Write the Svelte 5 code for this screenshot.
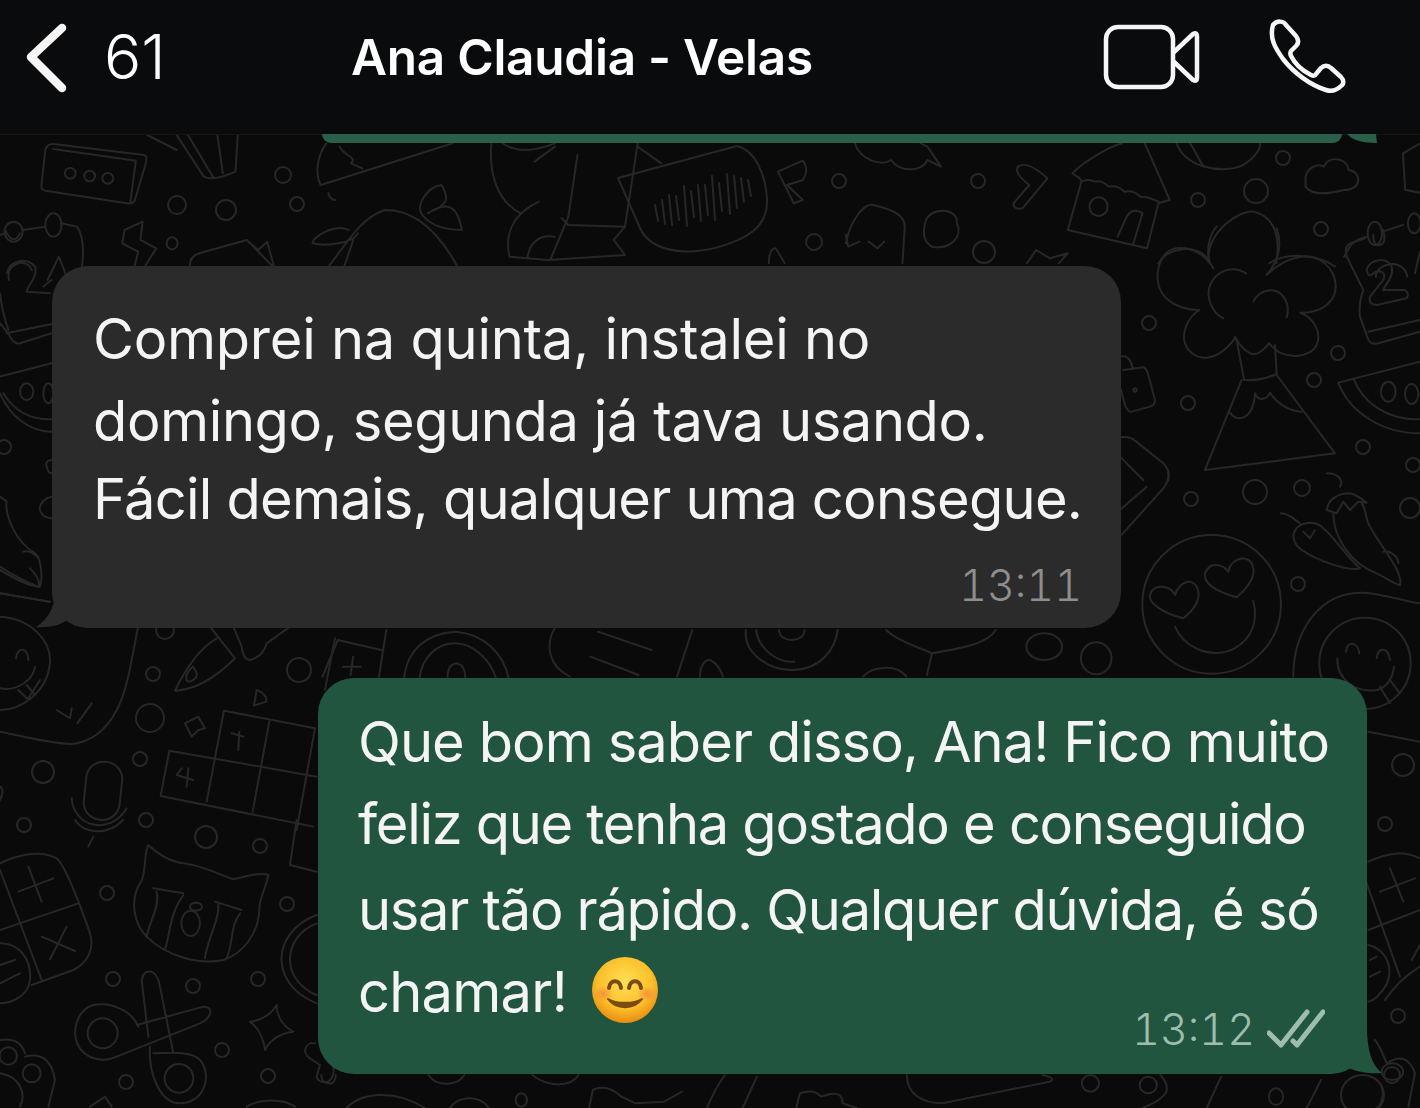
<script>
  const circles = [
    [283,175,8],[177,205,9],[226,210,10],[297,204,7],[839,181,7],[978,181,7],[1198,200,7],[1283,158,7],[1256,191,12],[1321,229,7],[814,242,8],[984,252,11],
    [1149,323,7],[1188,403,7],[1338,353,7],[1314,380,7],[1363,447,7],[1413,465,7],[1191,499,7],[1255,492,12],[1302,488,8],[1298,584,7],[1410,508,10],
    [4,447,7],[165,630,9],[153,674,7],[150,718,14],[299,670,12],[140,759,7],[43,772,11],[146,820,7],[107,893,7],[206,837,11],[260,846,7],[287,904,7],[113,979,7],[193,986,7],[258,979,7],[222,1050,7],[126,1082,7],[268,1076,7],[24,825,7],[1403,765,11],[1385,824,7],[1398,1016,7],[1392,1075,8]
  ];
  const wave = [[655,213,8],[662,212,12],[669,210,15],[676,208,12],[684,206,20],[691,204,13],[698,203,18],[705,200,15],[712,198,22],[719,197,14],[727,194,20],[734,192,16],[741,190,12],[748,188,8]];
</script>

<div class="page">
  <svg class="doodles" viewBox="0 0 1420 1108" width="1420" height="1108" aria-hidden="true">
    <g class="dg">
      {#each circles as c}<circle cx={c[0]} cy={c[1]} r={c[2]} />{/each}
      {#each wave as w}<path d="M{w[0]} {w[1]-w[2]} l3 {w[2]*2}" />{/each}
      <path d="M618 178 L737 146 C755 150 766 175 767 200 C768 228 745 240 715 248 C680 256 650 250 640 228 Z" />

      <g transform="scale(.4529 .3333)">
        <path d="M118 432 L318 465 Q326 468 322 490 L298 600 Q294 612 280 610 L100 572 Q88 568 92 550 L100 450 Q104 430 118 432 Z M118 447 L300 482 M300 482 L288 604" />
        <ellipse cx="155" cy="520" rx="12" ry="16" /><ellipse cx="198" cy="528" rx="12" ry="16" /><ellipse cx="238" cy="535" rx="12" ry="16" />
        <path d="M325 405 L390 450 M390 405 L450 530 Q470 545 520 515 L525 405 M415 405 L470 530 M480 405 L492 520" />
        <path d="M0 705 L12 700 M50 690 L100 680 M135 670 L170 680 Q190 720 180 810" />
        <ellipse cx="30" cy="695" rx="20" ry="30" /><ellipse cx="118" cy="675" rx="18" ry="35" />
        <path d="M20 840 C10 790 60 770 70 810 M105 840 L130 770 L150 840" />
        <path d="M275 690 L315 665 L310 720 L345 745 L315 810 M275 690 L270 730 L305 755 L295 810" />
        <ellipse cx="380" cy="730" rx="12" ry="18" />
        <path d="M420 810 Q415 770 440 760 L545 720 L610 810 M545 720 L570 750 L590 725 L605 800" />
        <path d="M720 430 C700 470 695 520 708 555 L1000 430 M750 440 C760 470 790 470 775 490 L800 505 M725 580 Q730 600 740 600" />
        <path d="M720 810 C770 720 800 650 850 630 C890 630 950 650 1010 800 M930 640 C920 610 945 560 975 555 C990 590 990 610 960 630 M945 640 C990 600 1010 620 1020 690 C990 690 950 680 930 640 M770 690 C740 670 690 710 690 730 C720 740 780 730 790 700 M760 800 L780 720" />
        <path d="M1085 430 C1080 500 1090 600 1150 640 M1110 430 Q1150 470 1225 430 M1180 485 L1225 440 M1275 465 L1255 650 L1215 780 M1190 605 C1150 630 1110 680 1125 770 L1210 780 L1380 765 L1355 720 L1380 680 L1255 675 L1240 655 M1165 770 Q1175 700 1225 710" />
        <path d="M1408 430 L1380 680 M1408 440 L1460 490" />
      </g>

      <g transform="translate(710 0) scale(.4529 .3333)">
        <path d="M150 515 L205 482 Q220 510 205 540 L170 555 L205 600 L185 610 Z" />
        <path d="M320 430 C330 480 380 500 400 480 C420 520 470 515 480 480 L510 500 L480 440 L465 430" />
        <path d="M680 500 Q700 480 745 535 L690 625 Q670 630 670 610 L705 555 Q670 520 680 500 Z" />
        <path d="M300 730 C310 660 340 610 360 615 C410 630 430 650 430 680 L425 790 M300 705 L305 740 L330 725 M350 725 L370 745 L385 725" />
        <path d="M475 670 C480 620 550 620 545 670 C560 710 530 750 490 740 Q465 720 475 670 Z" />
        <path d="M130 790 Q130 745 145 745 L165 790 M700 790 L720 750 L750 775 L790 760 L770 790" />
        <path d="M800 520 C820 490 880 440 910 430 M960 430 L1015 600 L990 610 M800 520 C810 530 820 535 820 545 Q835 535 850 545 Q865 540 880 560 Q900 555 915 575 Q935 570 950 590 Q970 590 990 605 M820 545 L790 690 L965 745 L990 610 M900 710 L920 650 Q935 620 955 640 L935 730" />
        <ellipse cx="858" cy="620" rx="20" ry="28" />
        <path d="M1030 430 C1050 500 1120 520 1170 500 C1200 480 1215 450 1215 430 M1060 430 C1070 450 1080 480 1090 500" />
        <path d="M1315 530 C1320 500 1345 490 1355 500 C1370 460 1410 480 1410 510 C1440 515 1440 570 1400 570 C1370 580 1330 590 1315 560 Z" />
        <path d="M1568 430 L1530 460 L1535 570 L1568 578" />
        <path d="M990 790 C1010 740 1080 730 1100 780 C1100 690 1170 630 1200 635 C1250 650 1260 720 1250 790 M1235 790 C1280 750 1350 770 1380 800" />
        <path d="M1400 770 L1415 735 Q1430 715 1450 710 M1485 695 L1530 675 M1470 830 C1470 790 1530 770 1540 830" />
        <ellipse cx="1468" cy="700" rx="16" ry="35" /><ellipse cx="1555" cy="670" rx="14" ry="30" />
      </g>

      <g transform="translate(1120 230) scale(.3333)">
        <path d="M280 115 C255 70 210 50 170 55 C130 60 110 105 113 150 C118 205 170 240 238 240 C200 265 185 310 195 340 C215 390 280 410 345 325 M270 100 C255 50 275 5 290 -10 M470 -5 C490 50 470 100 440 135 C490 85 560 65 600 90 C650 120 660 180 630 215 C610 240 570 250 540 248 C585 265 605 310 590 345 C570 385 490 395 447 340 M345 320 C365 360 395 375 405 372 C420 370 440 350 447 340 M378 130 C340 105 290 120 270 165 C255 205 280 250 310 265 M400 215 C420 175 470 170 490 200 C505 220 505 245 500 262" />
        <path d="M350 330 L372 448 M465 345 L470 432 M372 450 C400 452 440 445 470 432 M365 450 L255 720 L645 670 L470 435 M330 548 C350 580 400 570 405 490 C415 515 440 510 450 488 C470 520 510 545 545 545" />
        <path d="M10 420 L70 412 Q80 415 85 435 L105 510 Q105 525 90 530 L35 545 Q22 545 15 525 L0 470 M0 380 Q30 372 38 415" />
        <circle cx="45" cy="480" r="5" />
        <path d="M735 25 L690 40 Q672 50 680 80 L730 180 Q715 220 720 260 L745 330 Q755 345 775 340 L900 305 M745 305 L900 270 M760 15 Q760 50 780 45 Q800 40 790 0 M885 130 L900 65" />
        <path d="M740 120 C750 85 800 80 815 110 C825 140 790 170 790 180 L855 180 Q870 190 860 205 L770 225 Q745 225 750 200 L790 150 C800 130 780 115 760 130 Q745 145 740 120 Z" />
        <path d="M655 458 L900 395 M655 458 C690 550 790 610 900 610 M700 445 C730 520 800 570 900 568" />
        <ellipse cx="805" cy="485" rx="22" ry="30" /><ellipse cx="875" cy="492" rx="20" ry="30" />
        <path d="M0 622 Q30 618 45 632 L130 700 Q150 720 145 750 M0 680 L70 750" />
      </g>

      <g transform="translate(1120 470) scale(.3333)">
        <path d="M145 0 Q150 30 130 55 L0 200 M80 50 L0 120" />
        <circle cx="275" cy="403" r="208" />
        <path d="M190 445 C130 430 85 400 90 375 C100 340 150 345 165 375 C175 335 225 315 235 365 C240 395 215 425 190 445 Z M350 382 C290 365 250 340 255 310 C270 270 310 285 325 305 C330 265 390 245 400 295 C405 325 375 360 350 382 Z M165 470 C190 530 260 560 320 545 C380 525 420 470 400 392" />
        <path d="M660 50 C670 35 660 10 620 10 M640 130 C640 200 690 280 770 310 C800 325 830 345 840 345 C850 300 780 230 745 160 C735 130 735 110 725 100 M620 120 C625 90 650 70 690 70 C710 75 730 90 740 98 L715 95 L690 120 L670 95 L650 130 Z" />
        <path d="M482 130 C510 130 530 155 540 160 M520 195 C530 150 590 150 610 175 C650 210 680 260 720 295 C680 305 590 270 545 240 C525 225 520 210 520 195 M550 185 L570 205 L585 180 M790 245 C810 240 835 260 835 280" />
        <path d="M520 620 C520 480 600 365 730 368 C790 370 850 395 900 400" />
        <circle cx="735" cy="580" r="137" />
        <path d="M678 545 C680 510 715 515 718 550 M770 565 C772 530 805 530 810 570 M652 565 C650 630 710 670 770 660 C800 655 820 620 822 590 M780 650 L810 700 M810 630 L840 670" />
      </g>

      <g transform="translate(0 560) scale(.3333)">
        <path d="M0 170 C90 175 155 240 150 310 C140 400 60 450 0 450 M0 385 C50 395 100 360 105 320 M55 390 L80 415 M80 375 L105 405 M120 360 L85 415 M48 295 C50 260 85 260 85 300" />
        <path d="M0 100 L150 125 M0 20 Q60 60 115 80 Q125 60 90 25" />
        <path d="M415 195 C395 300 380 400 350 450 C320 510 270 550 210 552 C150 550 70 530 0 515 M170 450 L210 475 L215 445 M275 430 L232 490" />
        <path d="M650 235 C590 270 550 340 525 392 C580 390 640 360 705 295 M578 320 C555 340 555 360 565 365 C590 360 600 345 578 320 M700 200 L725 260 Q730 300 750 300 Q790 290 800 250 L870 200 M630 200 L705 295" />
        <path d="M555 490 L595 470 L615 505 L595 510 L575 530 Z M770 390 Q800 400 800 425 L762 437 Z" />
        <path d="M672 452 L945 505 L890 810 M672 452 L620 725 M508 572 L950 650 M508 572 L482 708 L940 800 M808 485 L758 755" />
        <path d="M695 520 L730 530 M718 515 L715 570 M545 625 L530 645 L580 660 M565 625 L560 680" />
        <rect x="255" y="605" width="108" height="175" rx="52" transform="rotate(6 309 692)" />
        <path d="M215 715 C220 800 330 830 380 745 M1005 235 L975 390 M0 680 Q15 690 0 720" />
      </g>

      <g transform="translate(0 820) scale(.3333)">
        <path d="M0 130 C40 110 120 85 170 115 Q200 140 270 340 C285 390 260 430 220 450 L95 495 M0 150 L125 480 M0 330 L235 250 M85 140 L125 245 M55 215 L160 175 M125 350 L225 393 M200 320 L150 418 M0 370 C60 370 95 420 90 480 C85 530 30 550 0 550 M0 435 L45 420 M0 490 L60 460" />
        <path d="M445 75 C470 100 510 125 550 130 C600 135 650 160 700 178 C740 170 780 155 805 165 C800 200 775 240 778 270 C775 340 730 400 670 420 C600 435 500 410 440 350 C400 310 390 240 420 190 C440 170 430 100 445 75 Z" />
        <path d="M460 205 L550 220 M470 215 C480 260 450 300 440 350 M550 225 C510 280 510 340 495 390 M645 245 L725 270 M655 250 C660 300 620 360 615 415 M720 280 C690 320 700 370 680 415" />
        <ellipse cx="572" cy="310" rx="28" ry="38" /><ellipse cx="588" cy="260" rx="18" ry="12" />
        <circle cx="308" cy="640" r="45" /><circle cx="537" cy="775" r="43" />
        <path d="M415 620 C395 570 330 545 280 555 C230 570 210 640 240 685 C270 725 320 725 350 710 L600 610 C640 590 640 560 610 560 L410 615 M425 480 Q430 450 455 455 Q475 465 480 500 L520 700 M425 480 L445 650 M450 680 C445 760 480 850 540 850 C610 850 640 770 600 720 C570 690 500 700 460 700" />
        <path d="M750 605 C790 600 815 580 830 555 C830 590 850 620 880 635 C840 640 810 660 795 690 C790 650 770 620 750 605 Z" />
        <path d="M950 285 C880 310 840 370 845 425 C850 490 900 530 950 550 M950 310 C900 330 870 370 870 420 C870 470 910 510 950 525 M225 0 C250 40 320 50 370 0 M280 50 L265 80 M890 0 L870 135 L950 155" />
        <circle cx="25" cy="708" r="26" /><circle cx="95" cy="760" r="27" />
        <path d="M0 660 Q60 650 75 700 M75 710 Q150 690 165 780 L145 860 M0 760 C60 770 80 820 60 860 M945 670 C915 665 905 700 930 715 L960 735 L950 770 Q955 790 985 785 Q1005 770 1000 740 M270 860 L315 830 L335 860 M740 860 C780 835 850 835 885 860" />
      </g>

      <g transform="translate(0 230) scale(.3333)">
        <path d="M20 130 C30 90 80 80 105 110 C115 140 80 170 80 185 L150 190 M0 190 Q5 240 25 300 M0 280 L25 310 Q40 345 60 340 L155 310 M20 310 L155 282 M130 170 Q140 160 155 150 M15 0 Q40 50 60 10" />
        <path d="M0 440 L155 400 M0 490 C30 560 90 605 155 605 M10 490 C40 540 90 570 155 568 M155 690 Q135 690 140 710 Q145 730 155 730 M155 800 C110 810 105 860 155 865" />
        <ellipse cx="80" cy="485" rx="20" ry="25" /><ellipse cx="145" cy="490" rx="15" ry="30" />
        <path d="M0 800 L20 815 C15 850 40 930 105 970 Q115 980 118 990 Q130 1040 120 1070 C90 1070 50 1050 0 1020 M70 965 C90 960 115 980 118 990 M0 1090 L145 1115" />
      </g>

      <g transform="translate(320 620) scale(.51 .3333)">
        <path d="M165 175 C170 90 210 40 265 35 C320 40 360 100 370 175 M195 175 C200 110 230 70 265 70 C300 70 335 120 345 175 M250 175 C250 140 260 130 270 130 C280 135 285 150 285 175" />
        <path d="M5 170 L35 60 L120 90 M115 175 L130 30 M65 110 L60 165 M45 140 L80 140" />
        <path d="M545 35 L650 90 M530 110 L625 165 M460 25 C440 80 450 140 490 170 M730 30 L700 170 M745 170 C745 130 760 110 770 125 C785 140 790 170 790 170" />
        <path d="M835 30 C830 100 880 150 925 150 C980 150 1010 90 1015 30 M855 30 C860 90 900 130 930 125 M900 30 C900 70 950 70 950 30" />
        <path d="M1110 30 C1130 60 1170 80 1200 100 L1190 165 M1200 100 C1260 85 1310 70 1325 30 M1065 170 C1080 140 1130 130 1150 170" />
        <ellipse cx="1420" cy="80" rx="35" ry="40" /><ellipse cx="1522" cy="115" rx="30" ry="48" />
      </g>

      <g transform="translate(300 1060) scale(.714 .3333)">
        <path d="M65 144 C85 100 130 85 175 144 M210 144 C220 110 250 100 265 144 M405 144 L410 90 Q430 70 450 110 L470 130 L510 125 L535 95 M570 144 C580 90 590 60 595 45 M620 144 L640 50 M695 144 L700 100 Q720 85 730 110 Q760 85 760 130 L780 144" />
        <path d="M850 45 C850 100 870 130 900 130 L1050 65 Q1060 55 1040 45 M1205 45 C1220 80 1220 110 1180 144 M1270 144 L1290 50 M1410 144 L1430 60 M30 45 Q30 75 45 70 Q50 60 50 45 M180 45 C190 80 220 80 230 45 M325 45 C350 85 380 80 390 45" />
        <ellipse cx="310" cy="120" rx="8" ry="20" /><ellipse cx="1107" cy="70" rx="12" ry="25" /><ellipse cx="1188" cy="75" rx="12" ry="25" /><ellipse cx="1367" cy="110" rx="10" ry="25" /><ellipse cx="1488" cy="105" rx="30" ry="60" /><ellipse cx="1530" cy="35" rx="15" ry="25" />
      </g>

      <g transform="translate(1360 700) scale(.3333)">
        <path d="M25 95 L180 125 M25 485 C80 460 130 450 180 475 M90 505 L130 605 M60 575 L165 535 M25 690 L180 630 M20 550 L120 830 M155 780 L180 735 M75 900 C110 850 140 825 180 800 M25 735 C90 750 110 830 60 880 Q45 900 25 905 M30 780 L50 770 M30 830 L60 815 M45 1020 C60 1040 70 1065 80 1090 Q140 1050 165 1120 L145 1220 M65 1160 C75 1190 60 1220 50 1224" />
      </g>
    </g>
  </svg>

  <header class="top">
    <svg class="back" width="46" height="70" viewBox="0 0 46 70" aria-hidden="true"><path d="M38 5 L7 34 L38 65" /></svg>
    <span class="count">61</span>
    <h1 class="name">Ana Claudia - Velas</h1>
    <svg class="video" width="98" height="66" viewBox="0 0 98 66" aria-hidden="true">
      <rect x="3" y="3" width="67" height="60" rx="12" />
      <path d="M71 28 L90 10 Q94 8 94 12 V54 Q94 58 90 56 L71 38" />
    </svg>
    <svg class="phone" width="78" height="76" viewBox="1272 20 78 76" aria-hidden="true">
      <path d="M1276 26 C1280 21 1287 22 1289 26 L1299 37 C1302 41 1302 44 1299 47 L1294 52 C1293 54 1293 55 1294 57 C1298 65 1306 72 1314 76 C1316 77 1318 77 1319 75 L1324 69 C1327 66 1331 66 1334 69 L1344 78 C1347 81 1347 85 1344 87 C1340 91 1335 93 1329 91 C1313 86 1297 74 1286 60 C1279 50 1272 40 1276 26 Z" />
    </svg>
  </header>

  <main class="chat">
    <div class="strip">
      <svg class="strip-tail" width="42" height="9" viewBox="0 0 42 9" aria-hidden="true"><path d="M9 0 C14 6 24 9 39 9 L38 0 Z" /></svg>
    </div>

    <section class="bubble in">
      <svg class="tail" width="40" height="44" viewBox="0 0 40 44" aria-hidden="true"><path d="M20 0 C20 20 14 34 0 43 C14 44 26 41 34 34 L40 0 Z" /></svg>
      <p class="line a1">Comprei na quinta, instalei no</p>
      <p class="line short a2">domingo, segunda já tava usando.</p>
      <p class="line">Fácil demais, qualquer uma consegue.</p>
      <div class="meta"><time>13:11</time></div>
    </section>

    <section class="bubble out">
      <svg class="tail" width="40" height="46" viewBox="0 0 40 46" aria-hidden="true"><path d="M22 0 C22 22 27 38 37 45 C24 46 10 44 0 38 L0 0 Z" /></svg>
      <p class="line b1">Que bom saber disso, Ana! Fico muito</p>
      <p class="line tall b2">feliz que tenha gostado e conseguido</p>
      <p class="line b2">usar tão rápido. Qualquer dúvida, é só</p>
      <p class="line">chamar!
        <svg class="emoji" width="70" height="70" viewBox="0 0 70 70" role="img" aria-label="emoji sorrindo">
          <defs>
            <radialGradient id="face" cx="50%" cy="38%" r="62%">
              <stop offset="0%" stop-color="#ffdf55" />
              <stop offset="65%" stop-color="#fbc02a" />
              <stop offset="100%" stop-color="#ea8c10" />
            </radialGradient>
            <radialGradient id="cheek">
              <stop offset="0%" stop-color="#f58a3c" stop-opacity=".85" />
              <stop offset="100%" stop-color="#f58a3c" stop-opacity="0" />
            </radialGradient>
          </defs>
          <circle cx="35" cy="35" r="33" fill="url(#face)" />
          <ellipse cx="13" cy="39" rx="10" ry="8" fill="url(#cheek)" />
          <ellipse cx="57" cy="39" rx="10" ry="8" fill="url(#cheek)" />
          <path class="eye" d="M19 33 C20 24 30 24 31 33" />
          <path class="eye" d="M39 33 C40 24 50 24 51 33" />
          <path class="mouth" d="M18 44 C26 55 44 55 52 44 C44 49 26 49 18 44 Z" />
        </svg>
      </p>
      <div class="meta">
        <time>13:12</time>
        <svg class="ticks" width="58" height="40" viewBox="0 0 58 40" aria-hidden="true">
          <path d="M2 24 L14 36 L40 3" />
          <path d="M26 32 L30 36 L56 3" />
        </svg>
      </div>
    </section>
  </main>
</div>

<style>
  :global(body) { margin: 0; background: #0a0a0b; }
  .page {
    position: relative;
    width: 1420px;
    height: 1108px;
    overflow: hidden;
    background: #0a0a0b;
    color: #f4f4f4;
    font-family: Inter, "Liberation Sans", sans-serif;
  }
  .doodles { position: absolute; left: 0; top: 0; }
  .dg * {
    fill: none;
    stroke: #272727;
    stroke-width: 2;
    stroke-linecap: round;
    stroke-linejoin: round;
    vector-effect: non-scaling-stroke;
  }
  .top {
    position: relative;
    box-sizing: border-box;
    height: 135px;
    background: #0a0b0d;
    border-bottom: 1px solid #15161a;
    display: flex;
    align-items: flex-start;
    padding-left: 24px;
    color: #fff;
  }
  .top svg { flex: none; fill: none; stroke: #f6f6f6; stroke-linecap: round; stroke-linejoin: round; }
  .back { margin-top: 23px; stroke-width: 8.5; }
  .count { margin-left: 34px; margin-top: 21px; font-size: 62px; line-height: 72px; font-weight: 300; width: 247px; letter-spacing: 0; }
  .name { margin: 30px 0 0; font-size: 49.5px; line-height: 54px; font-weight: 600; letter-spacing: -.25px; width: 752px; white-space: nowrap; }
  .video { margin-top: 24px; stroke-width: 4.5; }
  .phone { margin-left: 68px; margin-top: 19px; stroke-width: 4.5; }

  .chat { position: relative; display: flex; flex-direction: column; }
  .strip {
    position: relative;
    box-sizing: border-box;
    margin-top: -1px;
    margin-left: 322px;
    width: 1020px;
    height: 9px;
    background: #28604a;
    border-radius: 0 0 16px 16px;
  }
  .strip-tail { position: absolute; right: -38px; top: 0; fill: #28604a; }
  .bubble { position: relative; box-sizing: border-box; border-radius: 36px; }
  .in { margin: 123px 0 0 52px; width: 1069px; height: 362px; padding: 32px 39px 0 41px; background: #2b2b2c; }
  .out { margin: 50px 0 0 318px; width: 1049px; height: 396px; padding: 23px 37px 0 40px; background: #22553f; }
  .tail { position: absolute; bottom: 0; }
  .in .tail { left: -16px; fill: #2b2b2c; }
  .out .tail { right: -18px; fill: #22553f; }

  .line { margin: 0; font-size: 56px; line-height: 82px; height: 82px; white-space: nowrap; letter-spacing: -.75px; font-weight: 400; }
  .line.short { height: 78px; }
  .line.tall { height: 86px; }
  .a1 { letter-spacing: -.25px; }
  .a2 { letter-spacing: -.4px; }
  .b1 { letter-spacing: -.92px; }
  .b2 { letter-spacing: -1.3px; }
  .emoji { vertical-align: -13px; margin-left: 8px; }
  .eye { fill: none; stroke: #7c4a12; stroke-width: 4; stroke-linecap: round; }
  .mouth { fill: #7c4a12; stroke: #7c4a12; stroke-width: 2; stroke-linejoin: round; }

  .meta { display: flex; justify-content: flex-end; align-items: center; gap: 12px; font-size: 43px; line-height: 52px; font-weight: 300; letter-spacing: 0; font-variant-numeric: tabular-nums; }
  .in .meta { margin-top: 19px; color: #8e8e8e; }
  .out .meta { margin-top: -30px; color: #9dbeae; padding-right: 5px; }
  .ticks { fill: none; stroke: #9dbeae; stroke-width: 5; stroke-linecap: round; stroke-linejoin: round; }
</style>
